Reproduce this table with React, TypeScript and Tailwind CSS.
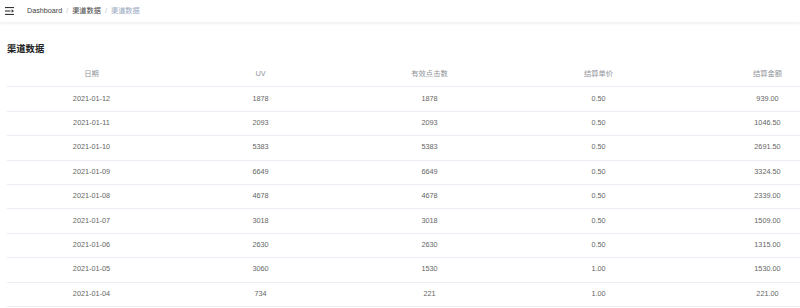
import React from 'react';

interface Row {
    date: string;
    uv: number;
    clicks: number;
    price: string;
    amount: string;
}

const rows: Row[] = [
    { date: '2021-01-12', uv: 1878, clicks: 1878, price: '0.50', amount: '939.00' },
    { date: '2021-01-11', uv: 2093, clicks: 2093, price: '0.50', amount: '1046.50' },
    { date: '2021-01-10', uv: 5383, clicks: 5383, price: '0.50', amount: '2691.50' },
    { date: '2021-01-09', uv: 6649, clicks: 6649, price: '0.50', amount: '3324.50' },
    { date: '2021-01-08', uv: 4678, clicks: 4678, price: '0.50', amount: '2339.00' },
    { date: '2021-01-07', uv: 3018, clicks: 3018, price: '0.50', amount: '1509.00' },
    { date: '2021-01-06', uv: 2630, clicks: 2630, price: '0.50', amount: '1315.00' },
    { date: '2021-01-05', uv: 3060, clicks: 1530, price: '1.00', amount: '1530.00' },
    { date: '2021-01-04', uv: 734, clicks: 221, price: '1.00', amount: '221.00' },
];

const headers = ['日期', 'UV', '有效点击数', '结算单价', '结算金额'];

const Hamburger = () => (
    <svg width="9" height="8" viewBox="0 0 9 8" className="text-[#333]">
        <rect x="0" y="0" width="9" height="1.1" fill="currentColor" />
        <rect x="0" y="3.45" width="5.5" height="1.1" fill="currentColor" />
        <rect x="0" y="6.9" width="9" height="1.1" fill="currentColor" />
        <path d="M6.6 2.3 L9 4 L6.6 5.7 Z" fill="currentColor" />
    </svg>
);

const App = () => {
    return (
        <div
            className="w-[800px] h-[308px] overflow-hidden bg-white"
            style={{ fontFamily: '"Liberation Sans", "Noto Sans CJK SC", sans-serif' }}
        >
            {/* Navbar */}
            <div className="h-[23px] flex items-center px-[5px] shadow-[0_1px_2px_rgba(0,21,41,0.06)] border-b border-[#f3f3f3]">
                <Hamburger />
                <div className="ml-[13px] flex items-center text-[7.2px] text-[#606266]">
                    <span className="text-[#444]">Dashboard</span>
                    <span className="mx-[4px] text-[#c0c4cc]">/</span>
                    <span className="text-[#444]">渠道数据</span>
                    <span className="mx-[4px] text-[#c0c4cc]">/</span>
                    <span className="text-[#97a8be]">渠道数据</span>
                </div>
            </div>

            {/* Content */}
            <div className="pl-[7px] pt-[19px]">
                <h2 className="text-[9.3px] leading-[14px] font-bold text-[#222]">渠道数据</h2>

                <div className="mt-[7px] w-[845px] text-[7.3px]">
                    <div className="grid grid-cols-5 h-[24.4px] items-center border-b border-[#ebeef5] text-[#909399]">
                        {headers.map((h) => (
                            <div key={h} className="text-center">{h}</div>
                        ))}
                    </div>
                    {rows.map((r) => (
                        <div
                            key={r.date}
                            className="grid grid-cols-5 h-[24.4px] items-center border-b border-[#ebeef5] text-[#666]"
                        >
                            <div className="text-center">{r.date}</div>
                            <div className="text-center">{r.uv}</div>
                            <div className="text-center">{r.clicks}</div>
                            <div className="text-center">{r.price}</div>
                            <div className="text-center">{r.amount}</div>
                        </div>
                    ))}
                </div>
            </div>
        </div>
    );
};

export default App;
